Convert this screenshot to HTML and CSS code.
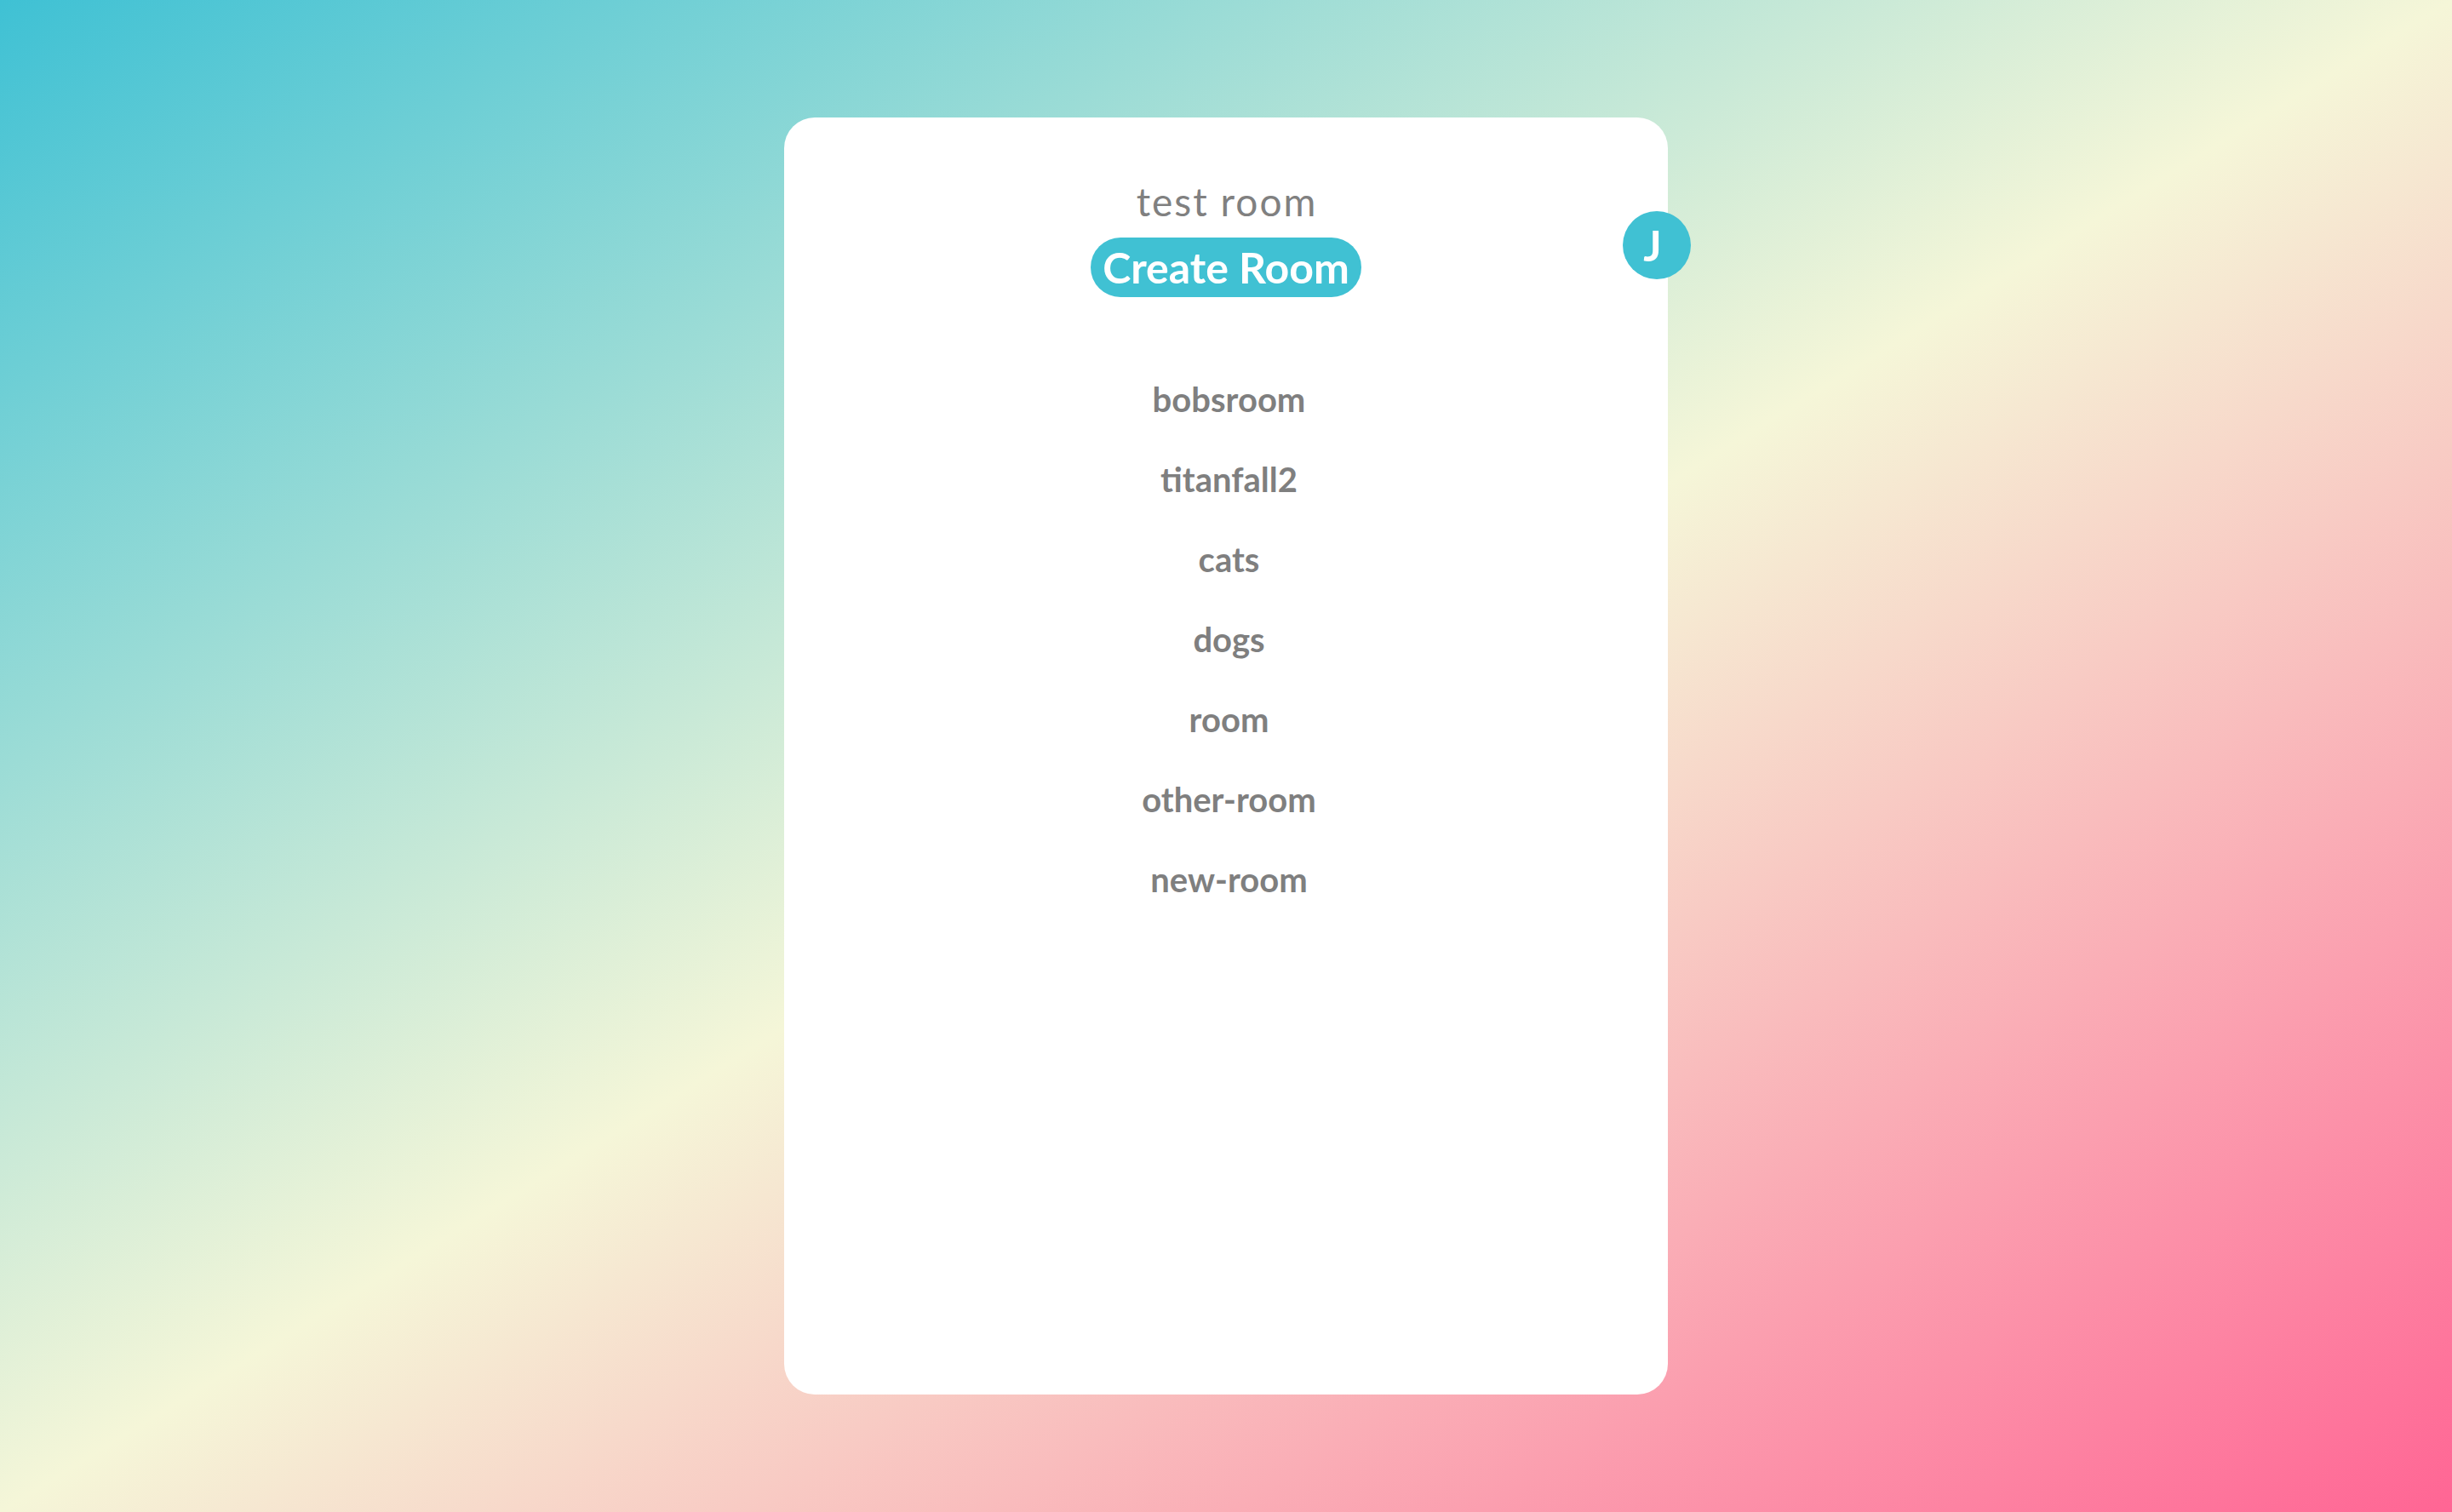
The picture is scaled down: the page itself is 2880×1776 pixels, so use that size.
FILE: index.html
```html
<!DOCTYPE html>
<html lang="en">
<head>
<meta charset="utf-8">
<title>Rooms</title>
<link rel="stylesheet" href="styles.css">
</head>
<body>
<main class="page">
  <section class="card">
    <h1 class="room-title">test room</h1>
    <button class="create-btn" type="button">Create Room</button>
    <ul class="room-list">
      <li class="room-item">bobsroom</li>
      <li class="room-item">titanfall2</li>
      <li class="room-item">cats</li>
      <li class="room-item">dogs</li>
      <li class="room-item">room</li>
      <li class="room-item">other-room</li>
      <li class="room-item">new-room</li>
    </ul>
    <div class="avatar">J</div>
  </section>
</main>
</body>
</html>
```
FILE: styles.css
```css
html, body {
  margin: 0;
  padding: 0;
  height: 100%;
}
body {
  font-family: "Lato", "Noto Sans", "Liberation Sans", sans-serif;
  background: linear-gradient(to bottom right, #3fc1d4 0%, #f5f6d8 50%, #ff6594 100%);
  overflow: hidden;
}
.page {
  height: 100%;
  display: flex;
  justify-content: center;
  align-items: flex-start;
  padding-top: 138px;
  box-sizing: border-box;
}
.card {
  position: relative;
  width: 1038px;
  height: 1500px;
  background: #ffffff;
  border-radius: 36px;
  box-sizing: border-box;
  padding-top: 73px;
  display: flex;
  flex-direction: column;
  align-items: center;
}
.room-title {
  margin: 0;
  padding-left: 2px;
  font-size: 46px;
  line-height: 52px;
  font-weight: 400;
  letter-spacing: 2px;
  color: #808080;
}
.create-btn {
  margin-top: 16px;
  height: 70px;
  padding: 0 14px;
  border: none;
  border-radius: 35px;
  background: #40c1d3;
  color: #ffffff;
  font-family: inherit;
  font-size: 50px;
  font-weight: 700;
  line-height: 70px;
}
.room-list {
  list-style: none;
  margin: 73px 0 0;
  padding: 0 0 0 7px;
  display: flex;
  flex-direction: column;
  align-items: center;
}
.room-item {
  font-size: 40px;
  line-height: 94px;
  font-weight: 700;
  color: #7f7f7f;
}
.avatar {
  position: absolute;
  left: 985px;
  top: 110px;
  width: 80px;
  height: 80px;
  box-sizing: border-box;
  padding-right: 10px;
  border-radius: 50%;
  background: #40c1d3;
  color: #ffffff;
  font-size: 50px;
  font-weight: 700;
  display: flex;
  align-items: center;
  justify-content: center;
}
```
